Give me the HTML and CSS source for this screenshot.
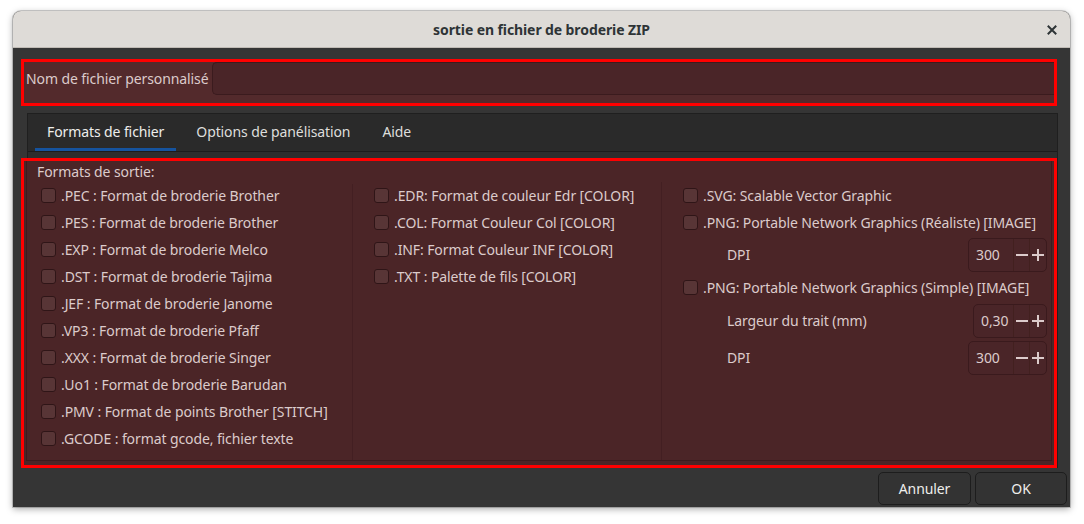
FILE: index.html
```html
<!DOCTYPE html>
<html lang="fr">
<head>
<meta charset="utf-8">
<title>sortie en fichier de broderie ZIP</title>
<link rel="stylesheet" href="styles.css">
</head>
<body>
<div class="window">
  <div class="titlebar">
    <span></span>
    <span class="title">sortie en fichier de broderie ZIP</span>
    <span class="close"><svg width="10" height="10" viewBox="0 0 10 10"><path d="M1.5 1.5 L8.5 8.5 M8.5 1.5 L1.5 8.5" stroke="#2e3436" stroke-width="2" stroke-linecap="square"/></svg></span>
  </div>
  <div class="content">
    <div class="namebox">
      <span class="namelabel">Nom de fichier personnalisé</span>
      <div class="entry"></div>
    </div>
    <div class="notebook">
      <div class="tabs">
        <div class="tab active">Formats de fichier</div>
        <div class="tab">Options de panélisation</div>
        <div class="tab">Aide</div>
      </div>
      <div class="page">
        <div class="outbox">
          <div class="frame">
            <div class="frame-label">Formats de sortie:</div>
            <div class="cols">
              <div class="col c1">
                <div class="row"><span class="cb"></span>.PEC : Format de broderie Brother</div>
                <div class="row"><span class="cb"></span>.PES : Format de broderie Brother</div>
                <div class="row"><span class="cb"></span>.EXP : Format de broderie Melco</div>
                <div class="row"><span class="cb"></span>.DST : Format de broderie Tajima</div>
                <div class="row"><span class="cb"></span>.JEF : Format de broderie Janome</div>
                <div class="row"><span class="cb"></span>.VP3 : Format de broderie Pfaff</div>
                <div class="row"><span class="cb"></span>.XXX : Format de broderie Singer</div>
                <div class="row"><span class="cb"></span>.Uo1 : Format de broderie Barudan</div>
                <div class="row"><span class="cb"></span>.PMV : Format de points Brother [STITCH]</div>
                <div class="row"><span class="cb"></span>.GCODE : format gcode, fichier texte</div>
              </div>
              <div class="col c2">
                <div class="row"><span class="cb"></span>.EDR: Format de couleur Edr [COLOR]</div>
                <div class="row"><span class="cb"></span>.COL: Format Couleur Col [COLOR]</div>
                <div class="row"><span class="cb"></span>.INF: Format Couleur INF [COLOR]</div>
                <div class="row"><span class="cb"></span>.TXT : Palette de fils [COLOR]</div>
              </div>
              <div class="col c3">
                <div class="row"><span class="cb"></span>.SVG: Scalable Vector Graphic</div>
                <div class="row"><span class="cb"></span>.PNG: Portable Network Graphics (Réaliste) [IMAGE]</div>
                <div class="srow">
                  <span class="slabel">DPI</span>
                  <div class="spin"><span class="sval w45">300</span><span class="sbtn"><svg width="12" height="12" viewBox="0 0 12 12"><path d="M0 6 H12" stroke="#dccbcb" stroke-width="2"/></svg></span><span class="sbtn"><svg width="12" height="12" viewBox="0 0 12 12"><path d="M0 6 H12 M6 0 V12" stroke="#dccbcb" stroke-width="2"/></svg></span></div>
                </div>
                <div class="row tall"><span class="cb"></span>.PNG: Portable Network Graphics (Simple) [IMAGE]</div>
                <div class="srow">
                  <span class="slabel">Largeur du trait (mm)</span>
                  <div class="spin"><span class="sval w40">0,30</span><span class="sbtn"><svg width="12" height="12" viewBox="0 0 12 12"><path d="M0 6 H12" stroke="#dccbcb" stroke-width="2"/></svg></span><span class="sbtn"><svg width="12" height="12" viewBox="0 0 12 12"><path d="M0 6 H12 M6 0 V12" stroke="#dccbcb" stroke-width="2"/></svg></span></div>
                </div>
                <div class="srow">
                  <span class="slabel">DPI</span>
                  <div class="spin"><span class="sval w45">300</span><span class="sbtn"><svg width="12" height="12" viewBox="0 0 12 12"><path d="M0 6 H12" stroke="#dccbcb" stroke-width="2"/></svg></span><span class="sbtn"><svg width="12" height="12" viewBox="0 0 12 12"><path d="M0 6 H12 M6 0 V12" stroke="#dccbcb" stroke-width="2"/></svg></span></div>
                </div>
              </div>
            </div>
          </div>
        </div>
      </div>
    </div>
    <div class="actions">
      <button class="btn annuler">Annuler</button>
      <button class="btn ok">OK</button>
    </div>
  </div>
</div>
</body>
</html>
```
FILE: styles.css
```css
* { box-sizing: border-box; }
html, body { margin: 0; padding: 0; background: #ffffff; }
body {
  font-family: "Noto Sans", "Open Sans", sans-serif;
  font-size: 14px;
  letter-spacing: -0.1px;
  width: 1084px;
  height: 524px;
  overflow: hidden;
  padding-top: 11px;
  padding-left: 13px;
}
.window {
  width: 1057px;
  height: 496px;
  background: #353535;
  border-radius: 8px 8px 0 0;
  box-shadow: 0 0 0 1px rgba(0,0,0,0.18), 0 2px 7px rgba(0,0,0,0.35);
  overflow: hidden;
  display: flex;
  flex-direction: column;
}
.titlebar {
  height: 37px;
  flex: none;
  background: #dedbd7;
  border-bottom: 1px solid #c0bbb5;
  display: grid;
  grid-template-columns: 1fr auto 1fr;
  align-items: center;
}
.title {
  font-weight: bold;
  font-size: 14px;
  color: #2e3436;
  padding-top: 1px;
}
.close {
  justify-self: end;
  margin-right: 13px;
  display: flex;
  padding-top: 1px;
}
.content {
  flex: 1;
  display: flex;
  flex-direction: column;
}
.namebox {
  margin: 11px 13px 0 8px;
  height: 47px;
  border: 3px solid #ff0000;
  background: #532a2c;
  display: flex;
  align-items: flex-start;
  padding-left: 2px;
}
.namelabel {
  color: #dccbcb;
  line-height: 33px;
  padding-right: 4px;
  white-space: nowrap;
}
.entry {
  flex: 1;
  height: 33px;
  background: #4a2528;
  border: 1px solid #3b1b1e;
  border-right: none;
  border-radius: 5px 0 0 5px;
}
.notebook {
  margin: 7px 12px 0 14px;
  height: 355px;
  border: 1px solid #1f1f1f;
  border-bottom: none;
  background: #2d2d2d;
  display: flex;
  flex-direction: column;
}
.tabs {
  height: 38px;
  flex: none;
  background: #2a2a2a;
  border-bottom: 1px solid #1c1c1c;
  display: flex;
  padding-left: 7px;
  gap: 8px;
}
.tab {
  padding: 0 12px;
  color: #dededc;
  line-height: 36px;
  border-bottom: 3px solid transparent;
  height: 37px;
  white-space: nowrap;
}
.tab.active {
  color: #eeeeec;
  border-bottom-color: #15539e;
}
.page {
  flex: 1;
  padding-top: 6px;
}
.outbox {
  margin: 0 0 0 -7px;
  height: 310px;
  border: 3px solid #ff0000;
  background: #4b2527;
  padding: 0 2px 0 2px;
  color: #dccbcb;
}
.frame {
  height: 300px;
  border-left: 1px solid #3c1c1e;
  border-right: 1px solid #3c1c1e;
  border-bottom: 1px solid #3c1c1e;
  display: flex;
  flex-direction: column;
}
.frame-label {
  height: 21px;
  line-height: 21px;
  padding-left: 10px;
  flex: none;
}
.cols {
  flex: 1;
  display: flex;
}
.col {
  display: flex;
  flex-direction: column;
}
.c1 {
  width: 326px;
  padding-left: 14px;
  border-right: 1px solid #431f22;
  margin-top: 2px;
  padding-top: 0;
}
.c1 .row:first-child { margin-top: -2px; }
.c2 {
  width: 309px;
  padding-left: 21px;
  border-right: 1px solid #431f22;
}
.c3 {
  flex: 1;
  padding-left: 21px;
  padding-right: 4px;
}
.row {
  height: 27px;
  display: flex;
  align-items: center;
  white-space: nowrap;
}
.row.tall { height: 29px; }
.cb {
  width: 15px;
  height: 15px;
  flex: none;
  background: #583536;
  border: 1px solid #2f1517;
  border-radius: 3px;
  margin-right: 5px;
}
.srow {
  height: 37px;
  display: flex;
  align-items: center;
  justify-content: space-between;
  padding-left: 44px;
}
.spin {
  height: 34px;
  display: flex;
  align-items: stretch;
  border: 1px solid #3a1a1d;
  border-radius: 5px;
  background: #4a2528;
}
.sval {
  padding-left: 7px;
  display: flex;
  align-items: center;
}
.w45 { width: 44px; }
.w40 { width: 39px; }
.sbtn {
  width: 16px;
  display: flex;
  align-items: center;
  justify-content: center;
  border-left: 1px solid #42201f;
}
.sbtn:last-child { width: 17px; }
.actions {
  display: flex;
  justify-content: flex-end;
  gap: 4px;
  margin-top: 4px;
  padding-right: 3px;
}
.btn {
  font-family: inherit;
  font-size: 14px;
  letter-spacing: -0.1px;
  height: 33px;
  background: #333333;
  color: #eeeeec;
  border: 1px solid #1d1d1d;
  border-radius: 5px;
  padding: 0;
}
.annuler { width: 93px; }
.ok { width: 92px; }
```
